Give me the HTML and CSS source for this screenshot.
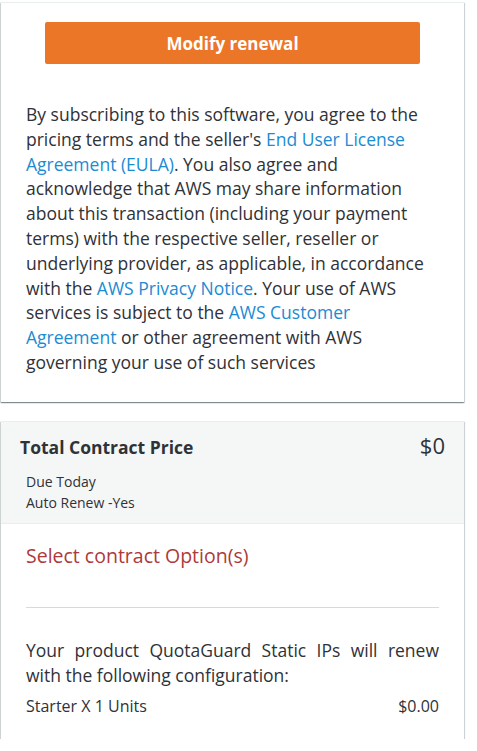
FILE: index.html
```html
<!DOCTYPE html>
<html lang="en">
<head>
    <meta charset="UTF-8">
    <meta name="viewport" content="width=device-width, initial-scale=1.0">
    <title>Modify renewal</title>
    <link rel="stylesheet" href="styles.css">
</head>
<body>
    <div class="page">
        <div class="card">
            <div class="card-body">
                <button class="renew-btn">Modify renewal</button>
                <p class="terms">
                    By subscribing to this software, you agree to the pricing terms and the seller's
                    <a href="#">End User License Agreement (EULA)</a>. You also agree and acknowledge
                    that AWS may share information about this transaction (including your payment
                    terms) with the respective seller, reseller or underlying provider, as applicable,
                    in accordance with the <a href="#">AWS Privacy Notice</a>. Your use of AWS services
                    is subject to the <a href="#">AWS Customer Agreement</a> or other agreement with
                    AWS governing your use of such services
                </p>
            </div>
        </div>

        <div class="card">
            <div class="card-header">
                <div class="price-row">
                    <span class="price-title">Total Contract Price</span>
                    <span class="price-value">$0</span>
                </div>
                <div class="price-meta">
                    <div>Due Today</div>
                    <div>Auto Renew -Yes</div>
                </div>
            </div>
            <div class="card-section">
                <div class="options-title">Select contract Option(s)</div>
                <hr class="divider">
                <p class="config-text">Your product QuotaGuard Static IPs will renew with the following configuration:</p>
                <div class="config-row">
                    <span>Starter X 1 Units</span>
                    <span>$0.00</span>
                </div>
            </div>
        </div>
    </div>
</body>
</html>
```

FILE: styles.css
```css
body {
    margin: 0;
    font-family: "Open Sans", Arial, sans-serif;
    color: #2f3237;
    background: #fff;
}

.page {
    width: 463px;
    padding: 2px 0 0 1px;
    display: flex;
    flex-direction: column;
    gap: 19px;
}

.card {
    background: #fff;
    border-top: 1px solid #eaeded;
    box-shadow: 0 1px 1px 0 rgba(0, 28, 36, 0.3),
                1px 1px 1px 0 rgba(0, 28, 36, 0.15),
                -1px 1px 1px 0 rgba(0, 28, 36, 0.15);
}

.card-body {
    padding: 19px 25px 27px;
    display: flex;
    flex-direction: column;
    align-items: center;
}

.renew-btn {
    width: 375px;
    height: 42px;
    border: none;
    border-radius: 2px;
    background: #ec7628;
    color: #fff;
    font-family: inherit;
    font-size: 17px;
    font-weight: 700;
}

.terms {
    margin: 38px 0 0;
    font-size: 17.5px;
    line-height: 24.8px;
}

.terms a {
    color: #1b8bd3;
    text-decoration: none;
}

.card-header {
    background: #f5f6f6;
    border-bottom: 1px solid #eaeded;
    padding: 8px 19px 10px;
}

.price-row {
    display: flex;
    justify-content: space-between;
    align-items: baseline;
}

.price-title {
    font-size: 17.5px;
    font-weight: 700;
}

.price-value {
    font-size: 22px;
}

.price-meta {
    margin-top: 11px;
    padding-left: 6px;
    font-size: 14px;
    line-height: 21px;
}

.card-section {
    padding: 18px 25px 22px;
}

.options-title {
    color: #ad3a3a;
    font-size: 19.5px;
}

.divider {
    border: none;
    border-top: 1px solid #d5dbdb;
    margin: 38px 0 30px;
}

.config-text {
    margin: 0;
    font-size: 17.5px;
    line-height: 24.8px;
    text-align: justify;
}

.config-row {
    display: flex;
    justify-content: space-between;
    font-size: 16px;
    margin-top: 8px;
}
```
